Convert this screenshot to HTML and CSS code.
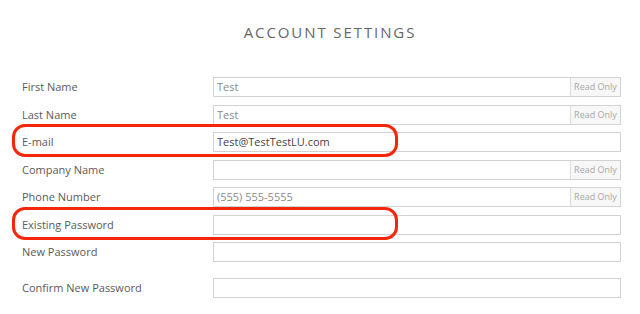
FILE: index.html
```html
<!DOCTYPE html>
<html>
<head>
<meta charset="utf-8">
<link rel="stylesheet" href="styles.css">
</head>
<body>
<div class="page">
  <h1 class="title">ACCOUNT SETTINGS</h1>
  <div class="form">
    <div class="row">
      <label class="label">First Name</label>
      <div class="field"><span class="value ro">Test</span><span class="addon">Read Only</span></div>
    </div>
    <div class="row">
      <label class="label">Last Name</label>
      <div class="field"><span class="value ro">Test</span><span class="addon">Read Only</span></div>
    </div>
    <div class="row">
      <label class="label">E-mail</label>
      <div class="field"><span class="value">Test@TestTestLU.com</span></div>
      <div class="highlight"></div>
    </div>
    <div class="row">
      <label class="label">Company Name</label>
      <div class="field"><span class="value ro"></span><span class="addon">Read Only</span></div>
    </div>
    <div class="row">
      <label class="label">Phone Number</label>
      <div class="field"><span class="value ro">(555) 555-5555</span><span class="addon">Read Only</span></div>
    </div>
    <div class="row">
      <label class="label">Existing Password</label>
      <div class="field"><span class="value"></span></div>
      <div class="highlight"></div>
    </div>
    <div class="row">
      <label class="label">New Password</label>
      <div class="field"><span class="value"></span></div>
    </div>
    <div class="row confirm">
      <label class="label">Confirm New Password</label>
      <div class="field"><span class="value"></span></div>
    </div>
  </div>
</div>
</body>
</html>
```
FILE: styles.css
```css
html, body {
  margin: 0;
  padding: 0;
  background: #fff;
}
.page {
  width: 640px;
  height: 314px;
  font-family: "Open Sans", "Liberation Sans", sans-serif;
  color: #555;
}
.title {
  margin: 0;
  padding: 22px 0 0 20px;
  height: 55px;
  box-sizing: border-box;
  text-align: center;
  font-size: 15px;
  font-weight: 400;
  letter-spacing: 1.9px;
  line-height: 20px;
  color: #666;
}
.form {
  display: flex;
  flex-direction: column;
  gap: 7.5px;
  padding: 22px 19px 0 22px;
}
.row {
  position: relative;
  display: grid;
  grid-template-columns: 191px 1fr;
  align-items: center;
  height: 20px;
}
.row.confirm {
  margin-top: 8.5px;
}
.label {
  font-size: 11px;
  color: #5a5a5a;
  line-height: 20px;
}
.field {
  display: flex;
  height: 20px;
  box-sizing: border-box;
  border: 1px solid #d2d2d2;
  background: #fff;
}
.value {
  flex: 1;
  font-size: 11px;
  line-height: 18px;
  padding-left: 3px;
  color: #444;
}
.value.ro {
  color: #8a8a8a;
}
.addon {
  width: 50px;
  box-sizing: border-box;
  border-left: 1px solid #dcdcdc;
  background: #f7f7f7;
  font-size: 9px;
  line-height: 18px;
  color: #a8a8a8;
  text-align: center;
}
.highlight {
  position: absolute;
  left: -10px;
  top: -8px;
  width: 386px;
  height: 33px;
  box-sizing: border-box;
  border: 3px solid #f5260a;
  border-radius: 13px;
  pointer-events: none;
}
```
